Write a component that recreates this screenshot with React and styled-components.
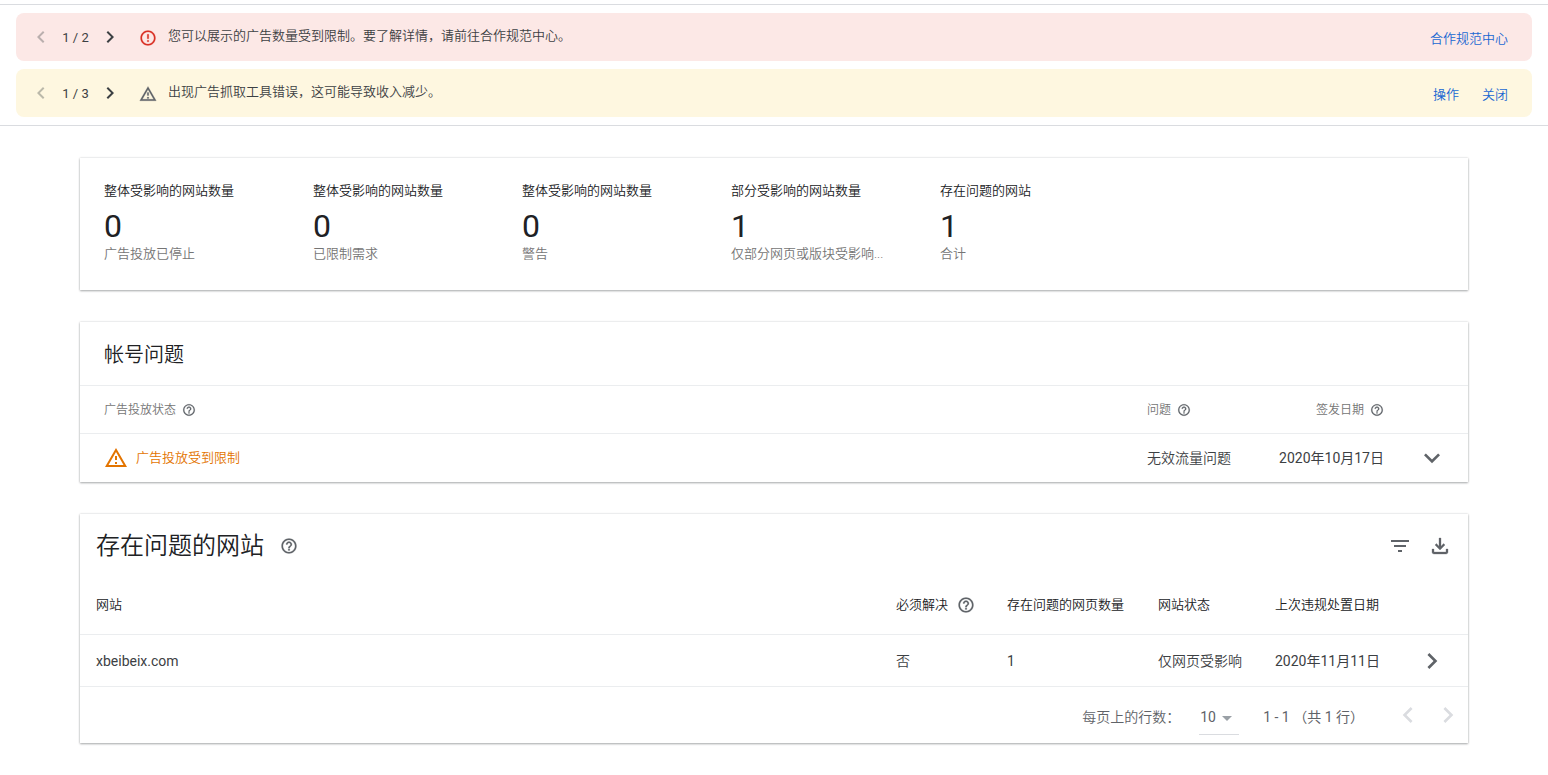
import React from "react";
import styled, { createGlobalStyle } from "styled-components";

const GlobalStyle = createGlobalStyle`
  *, *::before, *::after { box-sizing: border-box; }
  body {
    margin: 0;
    background: #fff;
    color: #3c4043;
    font-family: Roboto, "Noto Sans CJK SC", sans-serif;
    font-size: 14px;
    line-height: 20px;
  }
  button, select { font: inherit; color: inherit; }
`;

const PATHS = {
  left: "M15.41 7.41L14 6l-6 6 6 6 1.41-1.41L10.83 12z",
  right: "M8.59 16.59L13.17 12 8.59 7.41 10 6l6 6-6 6z",
  down: "M7.41 8.59L12 13.17l4.59-4.58L18 10l-6 6-6-6z",
  dropdown: "M7 10l5 5 5-5z",
  error:
    "M11 15h2v2h-2zm0-8h2v6h-2zm.99-5C6.47 2 2 6.48 2 12s4.47 10 9.99 10C17.52 22 22 17.52 22 12S17.52 2 11.99 2zM12 20c-4.42 0-8-3.58-8-8s3.58-8 8-8 8 3.58 8 8-3.58 8-8 8z",
  warning:
    "M12 5.99L19.53 19H4.47L12 5.99M12 2L1 21h22L12 2zm1 14h-2v2h2v-2zm0-6h-2v4h2v-4z",
  help:
    "M11 18h2v-2h-2v2zm1-16C6.48 2 2 6.48 2 12s4.48 10 10 10 10-4.48 10-10S17.52 2 12 2zm0 18c-4.41 0-8-3.59-8-8s3.59-8 8-8 8 3.59 8 8-3.59 8-8 8zm0-14c-2.21 0-4 1.79-4 4h2c0-1.1.9-2 2-2s2 .9 2 2c0 2-3 1.75-3 5h2c0-2.25 3-2.5 3-5 0-2.21-1.79-4-4-4z",
  filter: "M10 18h4v-2h-4v2zM3 6v2h18V6H3zm3 7h12v-2H6v2z",
  download:
    "M18 15v3H6v-3H4v3c0 1.1.9 2 2 2h12c1.1 0 2-.9 2-2v-3h-2zm-1-4l-1.41-1.41L13 12.17V4h-2v8.17L8.41 9.59 7 11l5 5 5-5z",
};

const Svg = styled.svg`
  display: block;
  flex: none;
  width: ${(p) => p.$size}px;
  height: ${(p) => p.$size}px;
  fill: ${(p) => p.$color};
  stroke: ${(p) => (p.$bold ? p.$color : "none")};
  stroke-width: 0.3;
`;

const Icon = ({ name, size = 24, color = "#5f6368", bold }) => (
  <Svg viewBox="0 0 24 24" $size={size} $color={color} $bold={bold} aria-hidden="true">
    <path d={PATHS[name]} />
  </Svg>
);

const IconButton = styled.button`
  display: inline-flex;
  align-items: center;
  justify-content: center;
  flex: none;
  padding: 0;
  border: 0;
  background: none;
  vertical-align: middle;
  cursor: ${(p) => (p.disabled ? "default" : "pointer")};
`;

const Notices = styled.section`
  display: flex;
  flex-direction: column;
  gap: 8px;
  margin-top: 4px;
  padding: 8px 16px;
  border-top: 1px solid #dadce0;
  border-bottom: 1px solid #dadce0;
`;

const Banner = styled.div`
  display: flex;
  align-items: center;
  min-height: 48px;
  padding: 0 24px 0 13px;
  border-radius: 8px;
  background: ${(p) => p.$background};
`;

const Count = styled.span`
  width: 45px;
  padding-top: 1px;
  text-align: center;
  font-size: 13px;
`;

const BannerIcon = styled.span`
  margin: 0 11px 0 17px;
  padding-top: 2px;
`;

const Message = styled.p`
  flex: 1;
  margin: 0;
  padding-bottom: 2px;
  font-size: 13px;
  font-weight: 350;
`;

const BannerLinks = styled.div`
  display: flex;
  gap: 23px;
  padding-top: 3px;
`;

const BannerLink = styled.a`
  color: #1967d2;
  font-size: 13px;
  font-weight: 350;
  text-decoration: none;
`;

const Main = styled.main`
  display: flex;
  flex-direction: column;
  gap: 32px;
  padding: 32px 80px;
`;

const Card = styled.section`
  background: #fff;
  box-shadow: 0 1px 2px rgba(60, 64, 67, 0.4), 0 0 2px rgba(60, 64, 67, 0.2);
`;

const Stats = styled(Card)`
  display: flex;
  padding: 23px 24px 26px;
`;

const Stat = styled.dl`
  display: flex;
  flex-direction: column;
  width: 209px;
  margin: 0;
`;

const StatLabel = styled.dt`
  color: #202124;
  font-size: 13px;
  font-weight: 350;
`;

const StatValue = styled.dd`
  margin: 8px 0 1px;
  color: #202124;
  font-size: 32px;
  line-height: 34px;
`;

const StatNote = styled.dd`
  margin: 0;
  color: #757575;
  font-size: 13px;
  font-weight: 350;
`;

const CardTitle = styled.h2`
  margin: 0;
  color: #202124;
  font-size: ${(p) => p.$size}px;
  font-weight: 350;
  line-height: 32px;
`;

const IssueHeading = styled.header`
  padding: 17px 24px 14px;
  border-bottom: 1px solid #ebedef;
`;

const Table = styled.table`
  width: 100%;
  border-collapse: separate;
  border-spacing: 0;
  table-layout: fixed;
`;

const Col = styled.col`
  width: ${(p) => (p.$width ? `${p.$width}px` : "auto")};
`;

const Cell = styled.td`
  height: ${(p) => p.$height}px;
  padding: 0 ${(p) => p.$right || 0}px ${(p) => p.$bottom || 0}px ${(p) => p.$left ?? 16}px;
  border-bottom: ${(p) => (p.$line ? "1px solid #ebedef" : "0")};
  color: ${(p) => p.$color || "inherit"};
  font-size: ${(p) => p.$font || 14}px;
  font-weight: ${(p) => (p.$latin ? 400 : 350)};
  text-align: ${(p) => p.$align || "left"};
  white-space: nowrap;
`;

const WithIcon = styled.span`
  display: inline-flex;
  align-items: center;
  gap: ${(p) => p.$gap}px;
  vertical-align: middle;
`;

const SitesHeading = styled.header`
  display: flex;
  align-items: center;
  justify-content: space-between;
  padding: 16px;
`;

const Actions = styled.div`
  display: flex;
  gap: 16px;
`;

const Pager = styled.footer`
  display: flex;
  align-items: center;
  justify-content: flex-end;
  height: 56px;
  padding: 4px 4px 0 0;
  color: #5f6368;
`;

const PagerLabel = styled.label`
  font-weight: 350;
`;

const SelectBox = styled.span`
  position: relative;
  width: 40px;
  margin: 0 24px 0 19px;
`;

const Select = styled.select`
  display: block;
  width: 100%;
  height: 36px;
  padding: 0 0 0 1px;
  border: 0;
  border-bottom: 1px solid #dadce0;
  border-radius: 0;
  background: none;
  appearance: none;
`;

const SelectArrow = styled.span`
  position: absolute;
  top: 7px;
  right: 0;
  pointer-events: none;
`;

const PagerButtons = styled.div`
  display: flex;
  gap: 8px;
  margin-left: 28px;
  padding-bottom: 4px;
`;

const notices = [
  {
    count: "1 / 2",
    icon: "error",
    color: "#d93025",
    background: "#fce8e6",
    text: "您可以展示的广告数量受到限制。要了解详情，请前往合作规范中心。",
    links: ["合作规范中心"],
  },
  {
    count: "1 / 3",
    icon: "warning",
    color: "#5f6368",
    background: "#fef7e0",
    text: "出现广告抓取工具错误，这可能导致收入减少。",
    links: ["操作", "关闭"],
  },
];

const stats = [
  ["整体受影响的网站数量", 0, "广告投放已停止"],
  ["整体受影响的网站数量", 0, "已限制需求"],
  ["整体受影响的网站数量", 0, "警告"],
  ["部分受影响的网站数量", 1, "仅部分网页或版块受影响..."],
  ["存在问题的网站", 1, "合计"],
];

const Help = ({ size }) => (
  <IconButton aria-label="帮助">
    <Icon name="help" size={size} bold />
  </IconButton>
);

const IssueHead = (props) => (
  <Cell as="th" $height={48} $font={12} $color="#757575" $line {...props} />
);

const SiteHead = (props) => (
  <Cell as="th" $height={57} $bottom={2} $font={13} $color="#202124" $line {...props} />
);

export default function App() {
  return (
    <>
      <GlobalStyle />
      <Notices>
        {notices.map((n) => (
          <Banner key={n.icon} $background={n.background}>
            <IconButton disabled aria-label="上一条">
              <Icon name="left" color="rgba(60, 64, 67, 0.34)" />
            </IconButton>
            <Count>{n.count}</Count>
            <IconButton aria-label="下一条">
              <Icon name="right" color="#3c4043" />
            </IconButton>
            <BannerIcon>
              <Icon name={n.icon} size={18} color={n.color} bold />
            </BannerIcon>
            <Message>{n.text}</Message>
            <BannerLinks>
              {n.links.map((l) => (
                <BannerLink key={l} href="#">
                  {l}
                </BannerLink>
              ))}
            </BannerLinks>
          </Banner>
        ))}
      </Notices>
      <Main>
        <Stats>
          {stats.map(([label, value, note]) => (
            <Stat key={note}>
              <StatLabel>{label}</StatLabel>
              <StatValue>{value}</StatValue>
              <StatNote>{note}</StatNote>
            </Stat>
          ))}
        </Stats>

        <Card>
          <IssueHeading>
            <CardTitle $size={20}>帐号问题</CardTitle>
          </IssueHeading>
          <Table>
            <colgroup>
              <Col />
              <Col $width={124} />
              <Col $width={141} />
              <Col $width={72} />
            </colgroup>
            <thead>
              <tr>
                <IssueHead $left={24}>
                  <WithIcon $gap={6}>
                    广告投放状态 <Help size={14} />
                  </WithIcon>
                </IssueHead>
                <IssueHead>
                  <WithIcon $gap={6}>
                    问题 <Help size={14} />
                  </WithIcon>
                </IssueHead>
                <IssueHead $left={0} $right={12} $align="right">
                  <WithIcon $gap={6}>
                    签发日期 <Help size={14} />
                  </WithIcon>
                </IssueHead>
                <Cell $height={48} $line />
              </tr>
            </thead>
            <tbody>
              <tr>
                <Cell $height={48} $left={24} $font={13} $color="#e37400">
                  <WithIcon $gap={8}>
                    <Icon name="warning" color="#e37400" /> 广告投放受到限制
                  </WithIcon>
                </Cell>
                <Cell $height={48}>无效流量问题</Cell>
                <Cell $height={48} $left={0} $right={12} $align="right" $latin>
                  2020年10月17日
                </Cell>
                <Cell $height={48} $left={0} $align="center">
                  <IconButton aria-label="展开">
                    <Icon name="down" size={32} />
                  </IconButton>
                </Cell>
              </tr>
            </tbody>
          </Table>
        </Card>

        <Card>
          <SitesHeading>
            <WithIcon $gap={16}>
              <CardTitle $size={24}>存在问题的网站</CardTitle>
              <Help size={18} />
            </WithIcon>
            <Actions>
              <IconButton aria-label="过滤">
                <Icon name="filter" />
              </IconButton>
              <IconButton aria-label="下载">
                <Icon name="download" bold />
              </IconButton>
            </Actions>
          </SitesHeading>
          <Table>
            <colgroup>
              <Col />
              <Col $width={111} />
              <Col $width={151} />
              <Col $width={117} />
              <Col $width={137} />
              <Col $width={72} />
            </colgroup>
            <thead>
              <tr>
                <SiteHead>网站</SiteHead>
                <SiteHead>
                  <WithIcon $gap={9}>
                    必须解决 <Help size={18} />
                  </WithIcon>
                </SiteHead>
                <SiteHead>存在问题的网页数量</SiteHead>
                <SiteHead>网站状态</SiteHead>
                <SiteHead>上次违规处置日期</SiteHead>
                <Cell $height={57} $line />
              </tr>
            </thead>
            <tbody>
              <tr>
                <Cell $height={52} $line $latin>xbeibeix.com</Cell>
                <Cell $height={52} $line>否</Cell>
                <Cell $height={52} $line $latin>1</Cell>
                <Cell $height={52} $line>仅网页受影响</Cell>
                <Cell $height={52} $line $latin>2020年11月11日</Cell>
                <Cell $height={52} $left={0} $align="center" $line>
                  <IconButton aria-label="查看详情">
                    <Icon name="right" size={32} />
                  </IconButton>
                </Cell>
              </tr>
            </tbody>
          </Table>
          <Pager>
            <PagerLabel htmlFor="page-size">每页上的行数：</PagerLabel>
            <SelectBox>
              <Select id="page-size" defaultValue="10">
                <option>10</option>
                <option>25</option>
                <option>50</option>
              </Select>
              <SelectArrow>
                <Icon name="dropdown" color="#9aa0a6" />
              </SelectArrow>
            </SelectBox>
            <span>1 - 1 （共 1 行）</span>
            <PagerButtons>
              <IconButton disabled aria-label="上一页">
                <Icon name="left" size={32} color="#dadce0" />
              </IconButton>
              <IconButton disabled aria-label="下一页">
                <Icon name="right" size={32} color="#dadce0" />
              </IconButton>
            </PagerButtons>
          </Pager>
        </Card>
      </Main>
    </>
  );
}
